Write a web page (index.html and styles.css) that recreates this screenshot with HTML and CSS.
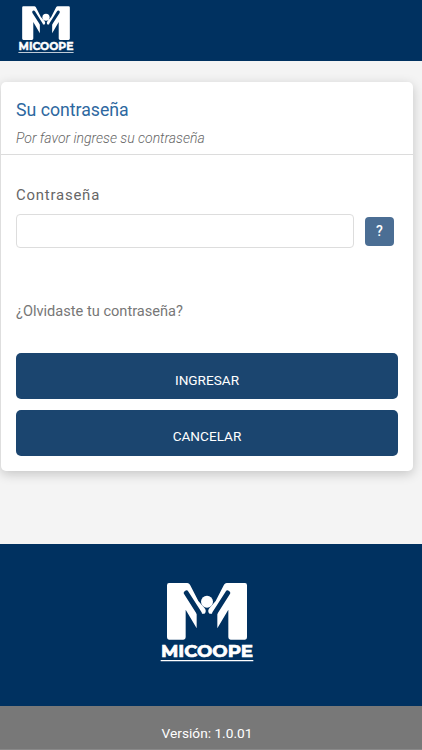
FILE: index.html
```html
<!DOCTYPE html>
<html lang="es">
<head>
<meta charset="utf-8">
<title>MICOOPE</title>
<link rel="stylesheet" href="styles.css">
</head>
<body>
<header class="topbar">
  <svg class="logo-small" viewBox="0 0 282 240">
    <g id="emblem">
      <g id="half">
        <path class="white" d="M27 0H82Q87 0 90 5L115 54L134 76Q140 83 135 91Q132 94 120 91L110 85V136L77 80V163Q77 170 70 170H27Q21 170 21 163V7Q21 0 27 0Z"/>
        <path class="slit" d="M79 30L118 91"/>
      </g>
      <use href="#half" transform="translate(282 0) scale(-1 1)"/>
      <circle class="white" cx="141" cy="56" r="18"/>
      <path class="white" d="M2 231H280V235H2Z"/>
    </g>
    <text class="wordmark" x="141" y="222" text-anchor="middle" textLength="276" lengthAdjust="spacingAndGlyphs">MICOOPE</text>
  </svg>
</header>
<main class="page">
  <form class="card">
    <div class="card-head">
      <h1>Su contraseña</h1>
      <p>Por favor ingrese su contraseña</p>
    </div>
    <div class="card-body">
      <label for="password">Contraseña</label>
      <div class="field"><input id="password" type="password"><button class="help" type="button">?</button></div>
      <a class="forgot">¿Olvidaste tu contraseña?</a>
      <div class="actions"><button type="button">INGRESAR</button><button type="button">CANCELAR</button></div>
    </div>
  </form>
</main>
<footer>
  <div class="brand">
    <svg class="logo-large" viewBox="0 0 282 240">
      <use href="#emblem"/>
      <text class="wordmark" x="141" y="222" text-anchor="middle" textLength="276" lengthAdjust="spacingAndGlyphs">MICOOPE</text>
    </svg>
  </div>
  <div class="version">Versión: 1.0.01</div>
</footer>
</body>
</html>
```
FILE: styles.css
```css
* { box-sizing: border-box; }
body { margin: 0; height: 750px; overflow: hidden; background: #f4f4f4; font-family: Roboto, "Liberation Sans", sans-serif; display: flex; flex-direction: column; }
.white { fill: #fff; }
.slit { fill: none; stroke: #003160; stroke-width: 15; stroke-linecap: round; }
.wordmark { fill: #fff; stroke: #fff; stroke-width: 2; font: 700 51px Montserrat, Inter, sans-serif; }
.topbar { height: 61px; flex: none; background: #003160; padding: 6px 18px; }
svg { display: block; }
.logo-small { width: 56px; height: 48px; }
.page { height: 483px; flex: none; padding: 21px 9px 0 1px; }
.card { height: 389px; background: #fff; border-radius: 5px; box-shadow: 0 3px 12px rgba(0,0,0,.2); }
.card-head { height: 73px; border-bottom: 1px solid #dcdcdc; padding: 17px 15px 0; }
h1 { margin: 0; font-size: 17.7px; line-height: 22px; font-weight: 400; color: #2d68a0; }
.card-head p { margin: 8px 0 0; font-size: 14px; line-height: 18px; font-style: italic; font-weight: 300; color: #666; }
.card-body { padding: 31px 15px 0 15px; }
label { display: block; font-size: 14.9px; line-height: 18px; letter-spacing: .8px; color: #666; }
.field { margin-top: 10px; display: flex; align-items: center; gap: 11px; }
input { width: 338px; height: 34px; border: 1px solid #ddd; border-radius: 4px; background: #fff; padding: 0; }
button { font-family: inherit; border: 0; padding: 0; color: #fff; }
.help { width: 29px; height: 29px; border-radius: 4px; background: #4b6e94; font-size: 14px; font-weight: 500; }
.forgot { display: block; margin-top: 53px; font-size: 14.6px; line-height: 20px; color: #777; }
.actions { margin-top: 32.4px; display: grid; gap: 10.5px; }
.actions button { height: 46px; border-radius: 5px; background: #1b456f; padding-top: 7px; font-size: 13.6px; }
footer { height: 206px; flex: none; }
.brand { height: 162px; background: #003160; padding: 39px 0 0 160px; }
.logo-large { width: 94px; height: 80px; }
.version { height: 44px; background: #787878; border-bottom: 1px solid #898989; color: #fff; text-align: center; font-size: 13.7px; line-height: 54px; padding-right: 8px; }
```
